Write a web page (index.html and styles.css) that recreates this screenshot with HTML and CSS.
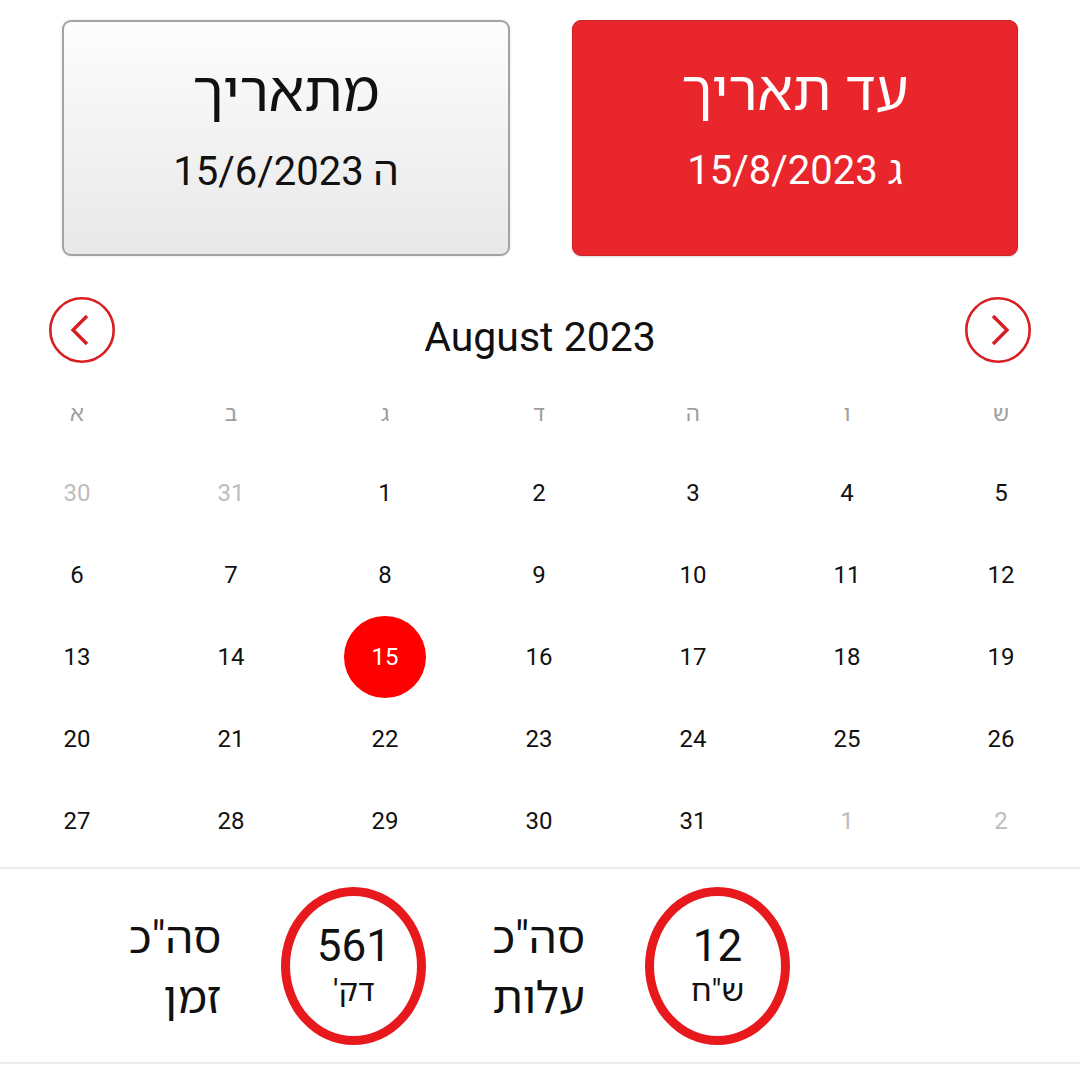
FILE: index.html
```html
<!DOCTYPE html>
<html lang="he">
<head>
<meta charset="utf-8">
<title>Date range</title>
<link rel="stylesheet" href="styles.css">
</head>
<body>
<div class="top">
  <div class="btn btn-from">
    <div class="btn-title" dir="rtl">מתאריך</div>
    <div class="btn-date" dir="rtl">ה 15/6/2023</div>
  </div>
  <div class="btn btn-to">
    <div class="btn-title" dir="rtl">עד תאריך</div>
    <div class="btn-date" dir="rtl">ג 15/8/2023</div>
  </div>
</div>

<div class="cal-head">
  <div class="nav">
    <svg width="66" height="66" viewBox="0 0 66 66"><circle cx="33" cy="33" r="31.7" fill="none" stroke="#d81e22" stroke-width="2.6"/><path d="M38 19 L24 33 L38 47" fill="none" stroke="#d81e22" stroke-width="3.4"/></svg>
  </div>
  <div class="month">August 2023</div>
  <div class="nav">
    <svg width="66" height="66" viewBox="0 0 66 66"><circle cx="33" cy="33" r="31.7" fill="none" stroke="#d81e22" stroke-width="2.6"/><path d="M28 19 L42 33 L28 47" fill="none" stroke="#d81e22" stroke-width="3.4"/></svg>
  </div>
</div>

<div class="weekdays">
  <span>א</span><span>ב</span><span>ג</span><span>ד</span><span>ה</span><span>ו</span><span>ש</span>
</div>

<div class="days">
  <span class="muted">30</span><span class="muted">31</span><span>1</span><span>2</span><span>3</span><span>4</span><span>5</span>
  <span>6</span><span>7</span><span>8</span><span>9</span><span>10</span><span>11</span><span>12</span>
  <span>13</span><span>14</span><span><b class="sel">15</b></span><span>16</span><span>17</span><span>18</span><span>19</span>
  <span>20</span><span>21</span><span>22</span><span>23</span><span>24</span><span>25</span><span>26</span>
  <span>27</span><span>28</span><span>29</span><span>30</span><span>31</span><span class="muted">1</span><span class="muted">2</span>
</div>

<div class="totals" dir="rtl">
  <div class="ring">
    <div class="ring-num">12</div>
    <div class="ring-unit">ש"ח</div>
  </div>
  <div class="label">סה"כ<br>עלות</div>
  <div class="ring">
    <div class="ring-num">561</div>
    <div class="ring-unit">דק'</div>
  </div>
  <div class="label">סה"כ<br>זמן</div>
</div>
</body>
</html>
```

FILE: styles.css
```css
* { box-sizing: border-box; }

body {
  margin: 0;
  background: #ffffff;
  font-family: Roboto, "Noto Sans Hebrew", "Liberation Sans", "DejaVu Sans", sans-serif;
  color: #111;
  width: 1080px;
}

.top {
  display: flex;
  gap: 62px;
  padding: 20px 62px 0;
}

.btn {
  flex: 1;
  height: 236px;
  border-radius: 9px;
  display: flex;
  flex-direction: column;
  align-items: center;
  text-align: center;
}

.btn-from {
  border: 2px solid #a3a3a3;
  background: linear-gradient(#fdfdfd, #e8e8e8);
  box-shadow: 0 0 2px 1px rgba(0, 0, 0, 0.06);
  color: #111;
}

.btn-to {
  border: 1px solid #c92326;
  background: #e8262b;
  box-shadow: 0 1px 2px rgba(0, 0, 0, 0.15);
  color: #fff;
}

.btn-title {
  font-size: 56px;
  line-height: 64px;
  margin-top: 38px;
}

.btn-date {
  font-size: 40px;
  line-height: 48px;
  margin-top: 24px;
}

.cal-head {
  display: flex;
  justify-content: space-between;
  align-items: center;
  padding: 0 49px 0 49px;
  margin-top: 41px;
  height: 66px;
}

.nav {
  width: 66px;
  height: 66px;
  display: flex;
}

.month {
  font-size: 41px;
  line-height: 48px;
  padding-top: 14px;
  color: #111;
}

.weekdays,
.days {
  display: grid;
  grid-template-columns: repeat(7, 154px);
}

.weekdays {
  margin-top: 10px;
  height: 78px;
}

.weekdays span {
  display: flex;
  align-items: center;
  justify-content: center;
  font-size: 22px;
  color: #9e9e9e;
}

.days {
  grid-auto-rows: 82px;
}

.days span {
  display: flex;
  align-items: center;
  justify-content: center;
  font-size: 24px;
  padding-top: 2px;
  color: #111;
}

.days span.muted {
  color: #bdbdbd;
}

.sel {
  width: 82px;
  height: 82px;
  border-radius: 50%;
  background: #ff0000;
  color: #fff;
  font-weight: normal;
  display: flex;
  align-items: center;
  justify-content: center;
}

.totals {
  margin-top: 6px;
  border-top: 2px solid #ebebeb;
  border-bottom: 2px solid #ebebeb;
  height: 197px;
  display: flex;
  align-items: center;
  padding-right: 290px;
}

.ring {
  width: 145px;
  height: 158px;
  border: 9px solid #e8191c;
  border-radius: 50%;
  display: flex;
  flex-direction: column;
  align-items: center;
  justify-content: center;
  padding-top: 0;
}

.ring-num {
  font-size: 44px;
  line-height: 50px;
  color: #111;
}

.ring-unit {
  font-size: 31px;
  line-height: 40px;
  color: #111;
}

.label {
  font-size: 44px;
  line-height: 60px;
  color: #111;
  margin: 0 60px 0 66px;
  padding-top: 4px;
}
```
